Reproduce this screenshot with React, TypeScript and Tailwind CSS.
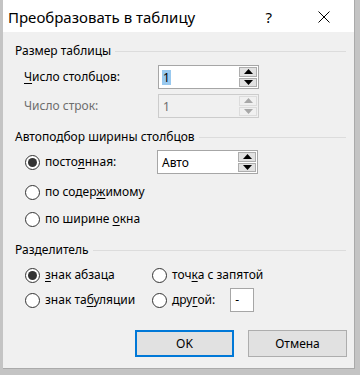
import React from 'react';

const font = { fontFamily: '"Noto Sans", "Liberation Sans", sans-serif' };

const SectionHeader: React.FC<{ title: string; className?: string }> = ({ title, className }) => (
  <div className={`flex items-center h-[16px] pl-[12px] pr-[8px] ${className ?? ''}`}>
    <span className="text-[12px] leading-[16px] text-black whitespace-nowrap">{title}</span>
    <div className="flex-1 h-px bg-[#dcdcdc] ml-[4px]" />
  </div>
);

const Arrow: React.FC<{ up?: boolean; color: string }> = ({ up, color }) => (
  <svg width="9" height="5" viewBox="0 0 9 5">
    {up ? <polygon points="0,5 9,5 4.5,0" fill={color} /> : <polygon points="0,0 9,0 4.5,5" fill={color} />}
  </svg>
);

const Spinner: React.FC<{ value: string; disabled?: boolean; selected?: boolean }> = ({ value, disabled, selected }) => (
  <div className={`flex w-[101px] h-[24px] border ${disabled ? 'border-[#cccccc] bg-[#f0f0f0]' : 'border-[#a6a6a6] bg-white'}`}>
    <div className="flex-1 flex items-center pl-[3px]">
      <span className={`text-[12px] leading-[15px] px-px ${selected ? 'bg-[#99c9ef] text-black' : disabled ? 'text-[#6d6d6d]' : 'text-black'}`}>{value}</span>
    </div>
    <div className="flex flex-col w-[20px] p-px gap-px">
      <div className={`flex-1 flex items-center justify-center border ${disabled ? 'border-[#dcdcdc] bg-[#f0f0f0]' : 'border-[#adadad] bg-[#e1e1e1]'}`}>
        <Arrow up color={disabled ? '#a8a8a8' : '#000'} />
      </div>
      <div className={`flex-1 flex items-center justify-center border ${disabled ? 'border-[#dcdcdc] bg-[#f0f0f0]' : 'border-[#adadad] bg-[#e1e1e1]'}`}>
        <Arrow color={disabled ? '#a8a8a8' : '#000'} />
      </div>
    </div>
  </div>
);

const Radio: React.FC<{ checked?: boolean; children: React.ReactNode }> = ({ checked, children }) => (
  <div className="flex items-center">
    <div className="w-[15px] h-[15px] rounded-full border border-[#333333] bg-white flex items-center justify-center">
      {checked && <div className="w-[9px] h-[9px] rounded-full bg-[#333333]" />}
    </div>
    <span className="ml-[5px] text-[12px] leading-[16px] text-black whitespace-nowrap">{children}</span>
  </div>
);

export default function App() {
  return (
    <div className="w-[360px] h-[375px] bg-[#c4c4c4] overflow-hidden" style={font}>
      <div className="ml-[3px] w-[352px] h-[369px] bg-[#f0f0f0] border-r border-b border-[#aaaaaa] flex flex-col">
        {/* title bar */}
        <div className="h-[32px] shrink-0 bg-white flex items-center pl-[5px] pt-[2px]">
          <span className="text-[15px] text-black">Преобразовать в таблицу</span>
          <span className="ml-auto text-[15px] text-black mr-[46px]">?</span>
          <svg width="12" height="12" viewBox="0 0 12 12" className="mr-[24px]">
            <path d="M0.5 0.5 L11.5 11.5 M11.5 0.5 L0.5 11.5" stroke="#000" strokeWidth="1" />
          </svg>
        </div>

        <SectionHeader title="Размер таблицы" className="mt-[11px]" />
        <div className="flex items-center mt-[6px] pl-[21px]">
          <span className="w-[134px] text-[12px] text-black"><u className="underline-offset-2">Ч</u>исло столбцов:</span>
          <Spinner value="1" selected />
        </div>
        <div className="flex items-center mt-[5px] pl-[21px]">
          <span className="w-[134px] text-[12px] text-[#6d6d6d]">Число строк:</span>
          <Spinner value="1" disabled />
        </div>

        <SectionHeader title="Автоподбор ширины столбцов" className="mt-[11px]" />
        <div className="flex items-center mt-[5px] pl-[22px]">
          <div className="w-[132px]">
            <Radio checked>посто<u className="underline-offset-2">я</u>нная:</Radio>
          </div>
          <Spinner value="Авто" />
        </div>
        <div className="mt-[10px] pl-[22px]">
          <Radio>по содер<u className="underline-offset-2">ж</u>имому</Radio>
        </div>
        <div className="mt-[11px] pl-[22px]">
          <Radio>по ширине <u className="underline-offset-2">о</u>кна</Radio>
        </div>

        <SectionHeader title="Разделитель" className="mt-[15px]" />
        <div className="flex items-center mt-[9px] pl-[22px] h-[16px]">
          <div className="w-[127px]">
            <Radio checked><u className="underline-offset-2">з</u>нак абзаца</Radio>
          </div>
          <Radio>точ<u className="underline-offset-2">к</u>а с запятой</Radio>
        </div>
        <div className="flex items-center mt-[5px] pl-[22px]">
          <div className="w-[127px]">
            <Radio>знак та<u className="underline-offset-2">б</u>уляции</Radio>
          </div>
          <Radio>дру<u className="underline-offset-2">г</u>ой:</Radio>
          <div className="ml-[15px] w-[24px] h-[24px] bg-white border border-[#a6a6a6] flex items-center pl-[4px] text-[12px] text-black">-</div>
        </div>

        <div className="flex mt-[18px] pl-[132px] gap-[14px]">
          <div className="w-[99px] h-[27px] bg-[#e1e1e1] border-2 border-[#0078d7] flex items-center justify-center text-[12px] text-black">OK</div>
          <div className="w-[99px] h-[27px] bg-[#e1e1e1] border border-[#adadad] flex items-center justify-center text-[12px] text-black">Отмена</div>
        </div>
      </div>
    </div>
  );
}
